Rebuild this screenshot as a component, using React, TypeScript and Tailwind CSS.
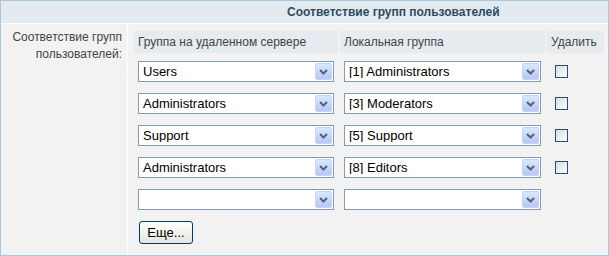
import React from "react";

const rows = [
  { remote: "Users", local: "[1] Administrators", del: true },
  { remote: "Administrators", local: "[3] Moderators", del: true },
  { remote: "Support", local: "[5] Support", del: true },
  { remote: "Administrators", local: "[8] Editors", del: true },
  { remote: "", local: "", del: false },
];

function Chevron() {
  return (
    <svg width="9" height="6" viewBox="0 0 9 6">
      <path d="M1 1 L4.5 4.5 L8 1" fill="none" stroke="#4d6185" strokeWidth="2" />
    </svg>
  );
}

function FakeSelect({ value, width }: { value: string; width: string }) {
  return (
    <div className={`flex h-[21px] ${width} items-center border border-[#7f9db9] bg-white`}>
      <span className="flex-1 truncate pl-[4px] text-[13px] leading-none text-black">{value}</span>
      <div className="mr-[1px] flex h-[17px] w-[17px] items-center justify-center rounded-[2px] border border-[#c3d3fd] bg-gradient-to-b from-[#dce6fd] to-[#b6c9f4]">
        <Chevron />
      </div>
    </div>
  );
}

function CheckBox() {
  return (
    <div className="h-[13px] w-[13px] border border-[#1c5180] bg-gradient-to-br from-[#dcdcd7] to-white" />
  );
}

export default function App() {
  return (
    <div
      className="flex h-[256px] w-[609px] flex-col border border-[#a8c8e0] bg-[#f2f2f2]"
      style={{ fontFamily: '"Liberation Sans", Arial, sans-serif' }}
    >
      <div className="flex h-[23px] shrink-0 items-center border-b border-white bg-[#e3eaf0] pl-[286px] text-[12px] font-bold text-[#2e4a62]">
        Соответствие групп пользователей
      </div>
      <div className="flex flex-1">
        <div className="w-[127px] shrink-0 border-r border-white pr-[5px] pt-[5px] text-right text-[12px] leading-[17px] text-[#444]">
          Соответствие групп
          <br />
          пользователей:
        </div>
        <div className="flex-1 pl-[6px] pt-[7px]">
          <div className="grid grid-cols-[204px_205px_57px] gap-x-[2px]">
            <div className="flex h-[22px] items-center bg-[#e5ebef] pl-[4px] text-[12px] text-[#444]">
              Группа на удаленном сервере
            </div>
            <div className="flex h-[22px] items-center bg-[#e5ebef] pl-[4px] text-[12px] text-[#444]">
              Локальная группа
            </div>
            <div className="flex h-[22px] items-center bg-[#e5ebef] pl-[4px] text-[12px] text-[#444]">
              Удалить
            </div>
            {rows.map((r, i) => (
              <React.Fragment key={i}>
                <div className="h-[32px] pl-[4px] pt-[8px]">
                  <FakeSelect value={r.remote} width="w-[196px]" />
                </div>
                <div className="h-[32px] pl-[4px] pt-[8px]">
                  <FakeSelect value={r.local} width="w-[197px]" />
                </div>
                <div className="h-[32px] pl-[8px] pt-[12px]">{r.del && <CheckBox />}</div>
              </React.Fragment>
            ))}
          </div>
          <button className="ml-[5px] mt-[8px] flex h-[23px] w-[54px] items-center justify-center rounded-[3px] border border-[#003c74] bg-gradient-to-b from-white to-[#e6e4dc] text-[13px] text-black">
            Еще...
          </button>
        </div>
      </div>
    </div>
  );
}
